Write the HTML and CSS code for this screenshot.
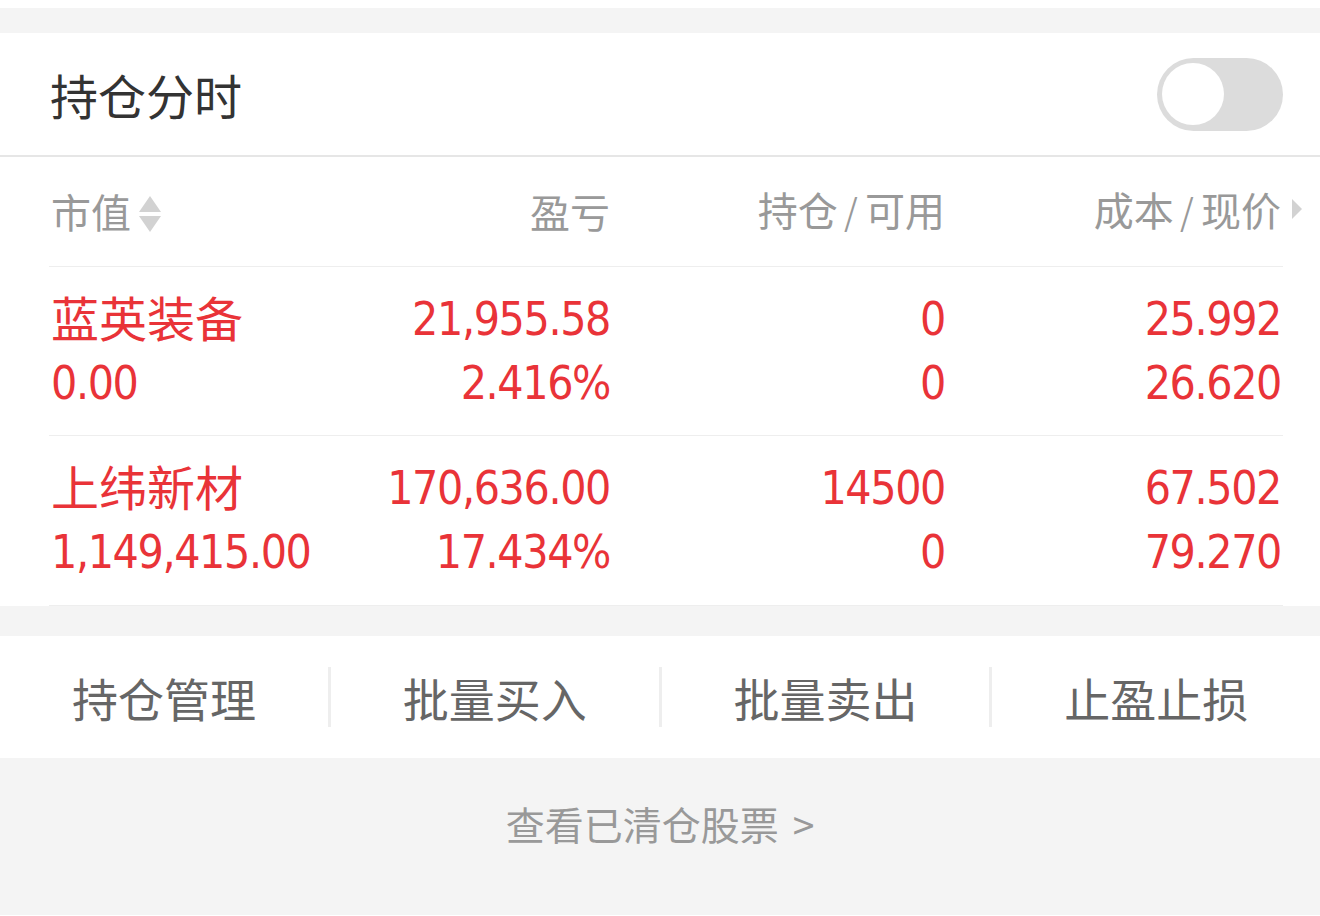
FILE: index.html
```html
<!DOCTYPE html>
<html lang="zh-CN">
<head>
    <meta charset="UTF-8">
    <meta name="viewport" content="width=device-width, initial-scale=1.0">
    <title>持仓</title>
    <link rel="stylesheet" href="styles.css">
</head>
<body>
    <div class="gap top-gap"></div>

    <div class="title-bar">
        <span class="title">持仓分时</span>
        <div class="switch"><div class="knob"></div></div>
    </div>

    <div class="table">
        <div class="row head">
            <div class="cell left">市值<span class="sort"><i class="up"></i><i class="down"></i></span></div>
            <div class="cell">盈亏</div>
            <div class="cell">持仓<span class="slash">/</span>可用</div>
            <div class="cell last">成本<span class="slash">/</span>现价<i class="more"></i></div>
        </div>

        <div class="row stock">
            <div class="cell left">
                <div class="name">蓝英装备</div>
                <div class="num">0.00</div>
            </div>
            <div class="cell">
                <div class="num">21,955.58</div>
                <div class="num">2.416%</div>
            </div>
            <div class="cell">
                <div class="num">0</div>
                <div class="num">0</div>
            </div>
            <div class="cell last">
                <div class="num">25.992</div>
                <div class="num">26.620</div>
            </div>
        </div>

        <div class="row stock">
            <div class="cell left">
                <div class="name">上纬新材</div>
                <div class="num">1,149,415.00</div>
            </div>
            <div class="cell">
                <div class="num">170,636.00</div>
                <div class="num">17.434%</div>
            </div>
            <div class="cell">
                <div class="num">14500</div>
                <div class="num">0</div>
            </div>
            <div class="cell last">
                <div class="num">67.502</div>
                <div class="num">79.270</div>
            </div>
        </div>
    </div>

    <div class="gap"></div>

    <div class="actions">
        <div class="action">持仓管理</div>
        <div class="action">批量买入</div>
        <div class="action">批量卖出</div>
        <div class="action">止盈止损</div>
    </div>

    <div class="footer">
        <a class="cleared" href="#">查看已清仓股票<span class="arrow">&gt;</span></a>
    </div>
</body>
</html>
```

FILE: styles.css
```css
body {
    margin: 0;
    padding-top: 8px;
    background: #fff;
    font-family: "Noto Sans CJK SC", sans-serif;
    width: 1320px;
    height: 916px;
    overflow: hidden;
}

.gap {
    height: 30px;
    background: #f4f4f4;
}

.top-gap {
    height: 25px;
}

.title-bar {
    height: 122px;
    display: flex;
    align-items: center;
    justify-content: space-between;
    padding: 0 37px 0 50px;
    border-bottom: 2px solid #e6e6e6;
}

.title {
    font-size: 48px;
    color: #333;
    line-height: 60px;
}

.switch {
    width: 126px;
    height: 73px;
    border-radius: 37px;
    background: #dcdcdc;
    display: flex;
    align-items: center;
    padding-left: 5px;
    box-sizing: border-box;
}

.knob {
    width: 62px;
    height: 62px;
    border-radius: 50%;
    background: #fff;
}

.table {
    margin: 0 37px 0 49px;
}

.row {
    display: grid;
    grid-template-columns: 280px 281px 335px 338px;
    border-bottom: 1px solid #eeeeee;
}

.cell {
    text-align: right;
}

.cell.left {
    text-align: left;
    padding-left: 2px;
}

.cell.last {
    padding-right: 2px;
}

.head {
    height: 110px;
    box-sizing: border-box;
    padding-bottom: 2px;
    align-items: center;
    font-size: 40px;
    color: #999;
}

.head .cell {
    line-height: 50px;
}

.slash {
    display: inline-block;
    margin: 0 7px 0 6px;
    font-family: "DejaVu Sans", sans-serif;
    font-size: 42px;
    font-weight: 300;
    transform: translateY(2px);
}

.sort {
    display: inline-flex;
    flex-direction: column;
    gap: 4px;
    margin-left: 8px;
    vertical-align: 16px;
}

.sort i {
    width: 0;
    height: 0;
    border-left: 11px solid transparent;
    border-right: 11px solid transparent;
}

.sort .up {
    border-bottom: 16px solid #d2d2d2;
}

.sort .down {
    border-top: 16px solid #d2d2d2;
}

.last {
    position: relative;
}

.more {
    position: absolute;
    right: -19px;
    top: 15px;
    width: 0;
    height: 0;
    border-top: 10px solid transparent;
    border-bottom: 10px solid transparent;
    border-left: 10px solid #d2d2d2;
}

.stock {
    height: 169px;
    box-sizing: border-box;
    padding: 20px 0 20px;
    color: #e93338;
}

.stock:last-child {
    height: 170px;
}

.stock .cell > div {
    height: 64px;
    line-height: 64px;
}

.name {
    font-size: 48px;
    position: relative;
    top: -3px;
}

.num {
    font-family: "DejaVu Sans", sans-serif;
    font-stretch: condensed;
    font-size: 46px;
    letter-spacing: -1.4px;
}

.actions {
    height: 122px;
    display: flex;
    align-items: center;
}

.action {
    flex: 1;
    text-align: center;
    font-size: 46px;
    color: #666;
    line-height: 60px;
    border-left: 3px solid #eeeeee;
}

.action:first-child {
    border-left: none;
}

.footer {
    height: 157px;
    background: #f4f4f4;
    text-align: center;
    padding-top: 40px;
    box-sizing: border-box;
}

.cleared {
    font-size: 39px;
    color: #999;
    text-decoration: none;
    line-height: 50px;
}

.arrow {
    margin-left: 14px;
}
```
